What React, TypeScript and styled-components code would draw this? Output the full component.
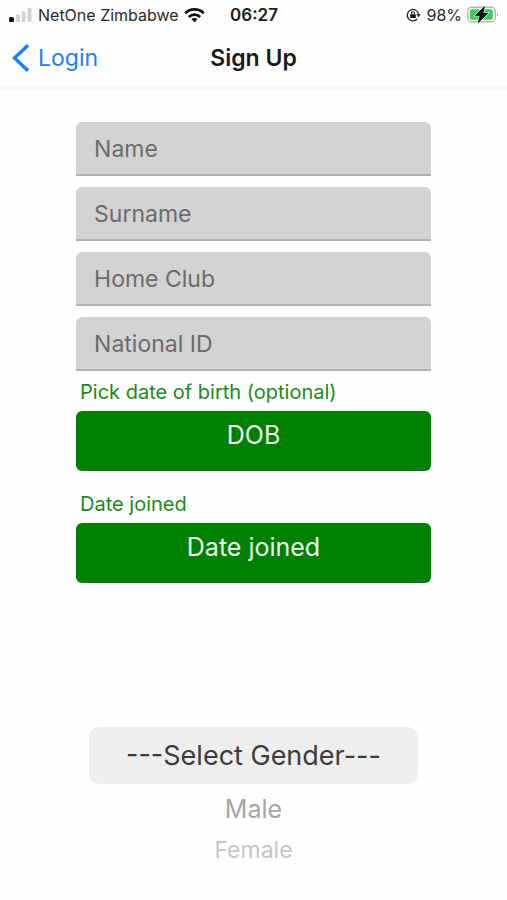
import React, { useState } from "react";
import styled, { createGlobalStyle } from "styled-components";

const GlobalStyle = createGlobalStyle`
  *, *::before, *::after { box-sizing: border-box; }
  body { margin: 0; background: #fefefe; }
  body, button, input { font-family: Inter, "Liberation Sans", sans-serif; }
`;

const Screen = styled.div`
  min-height: 100vh;
  display: flex;
  flex-direction: column;
`;

const StatusBar = styled.div`
  display: grid;
  grid-template-columns: 1fr auto 1fr;
  align-items: center;
  height: 30px;
  padding: 0 8px 0 9px;
  font-size: 16px;
  line-height: 20px;
  color: #2b2b2b;
`;

const StatusGroup = styled.div<{ $end?: boolean }>`
  display: flex;
  align-items: center;
  justify-content: ${(p) => (p.$end ? "flex-end" : "flex-start")};
  gap: 5px;
  white-space: nowrap;
`;

const Clock = styled.time`
  font-size: 17px;
  font-weight: 600;
  color: #1c1c1c;
`;

const NavBar = styled.header`
  display: grid;
  grid-template-columns: 1fr auto 1fr;
  align-items: center;
  height: 60px;
  padding: 0 12px;
  border-bottom: 4px solid #f6f6f6;
`;

const BackLink = styled.a`
  display: flex;
  align-items: center;
  gap: 8px;
  font-size: 23px;
  line-height: 30px;
  color: #1a80f5;
  text-decoration: none;
`;

const Title = styled.h1`
  margin: 0;
  font-size: 23px;
  line-height: 30px;
  font-weight: 600;
  color: #1a1a1a;
`;

const Form = styled.form`
  width: 70%;
  margin: 32px auto 0;
  display: flex;
  flex-direction: column;
`;

const Fields = styled.div`
  display: grid;
  gap: 11px;
`;

const Field = styled.input`
  width: 100%;
  height: 54px;
  padding: 2px 18px 0;
  border: 0;
  border-bottom: 2px solid #b0b0b0;
  border-radius: 6px 6px 0 0;
  background: #d3d3d3;
  color: #333;
  font-size: 23px;
  &::placeholder { color: #6c6c6c; opacity: 1; }
`;

const DateGroup = styled.div<{ $gap: number }>`
  margin-top: ${(p) => p.$gap}px;
  display: flex;
  flex-direction: column;
`;

const DateLabel = styled.label`
  padding: 0 4px;
  font-size: 20px;
  line-height: 38px;
  color: #1a8a1a;
`;

const DateButton = styled.button`
  height: 60px;
  padding: 8px 0 20px;
  border: 0;
  border-radius: 6px;
  background: #008000;
  color: #eef8ee;
  font-size: 25px;
  line-height: 32px;
`;

const Picker = styled.fieldset`
  margin: 144px 13px 0;
  padding: 0;
  border: 0;
  min-width: 0;
  text-align: center;
`;

const tones = {
  near: { color: "#3c3c3c", size: 27, height: 57 },
  mid: { color: "#a6a6a6", size: 25, height: 50 },
  far: { color: "#c6c6c6", size: 23, height: 32 },
};

const Option = styled.label<{ $tone: keyof typeof tones }>`
  display: block;
  position: relative;
  border-radius: 10px;
  background: ${(p) => (p.$tone === "near" ? "#eeeeee" : "transparent")};
  color: ${(p) => tones[p.$tone].color};
  font-size: ${(p) => tones[p.$tone].size}px;
  line-height: ${(p) => tones[p.$tone].height}px;
`;

const OptionInput = styled.input`
  position: absolute;
  inset: 0;
  width: 100%;
  height: 100%;
  margin: 0;
  opacity: 0;
`;

const fields = ["Name", "Surname", "Home Club", "National ID"];

const options: { text: string; tone: keyof typeof tones }[] = [
  { text: "---Select Gender---", tone: "near" },
  { text: "Male", tone: "mid" },
  { text: "Female", tone: "far" },
];

const SignalIcon = () => (
  <svg width="24" height="16" viewBox="0 0 24 16" aria-hidden="true">
    <rect x="0" y="10" width="5" height="5" rx="1.5" fill="#111" />
    <rect x="7" y="7.500" width="4" height="7.500" rx="1" fill="#d2d2d2" />
    <rect x="12.500" y="4.500" width="4" height="10.500" rx="1" fill="#d2d2d2" />
    <rect x="18.500" y="1" width="4" height="14" rx="1" fill="#d2d2d2" />
  </svg>
);

const WifiIcon = () => (
  <svg width="21" height="16" viewBox="0 0 21 16" fill="none" stroke="#111" strokeWidth="2.700" aria-hidden="true">
    <path d="M1.200 6.200C6.400 1.100 14.600 1.100 19.800 6.200" />
    <path d="M4.800 9.900C8 6.900 13 6.900 16.200 9.900" />
    <path d="M7.300 12.100C9.200 10.500 11.800 10.500 13.700 12.100L10.500 15.200Z" fill="#111" stroke="none" />
  </svg>
);

const LockIcon = () => (
  <svg width="15" height="14" viewBox="0 0 15 14" fill="none" stroke="#222" aria-hidden="true">
    <path d="M11.200 11A5.700 5.700 0 1 1 12.500 5.700" strokeWidth="1.300" />
    <path d="M10.300 6H14.700L12.500 9.200Z" fill="#222" stroke="none" />
    <rect x="4.200" y="6.300" width="5.600" height="3.800" rx="0.700" fill="#111" stroke="none" />
    <path d="M5.500 6.500V5.200a1.500 1.500 0 0 1 3 0V6.500" strokeWidth="1.100" />
  </svg>
);

const BatteryIcon = () => (
  <svg width="32" height="18" viewBox="0 0 32 18" aria-hidden="true">
    <rect x="0.750" y="1.250" width="27.500" height="14.500" rx="4" fill="#fff" stroke="#b4b4b4" strokeWidth="1.400" />
    <rect x="2.800" y="3.300" width="23" height="10.400" rx="2" fill="#3ccb5c" />
    <path d="M30 6.200c1.500 0.600 1.500 4 0 4.600Z" fill="#b4b4b4" />
    <path
      d="M17.500 0.600L8.400 9.600H13L11.300 16.800L20.800 7.200H16Z"
      fill="#111"
      stroke="#d8f5de"
      strokeWidth="1.800"
      paintOrder="stroke"
    />
    <path d="M17.500 0.600L8.400 9.600H13L11.300 16.800L20.800 7.200H16Z" fill="#111" stroke="#111" strokeWidth="0.500" />
  </svg>
);

const ChevronIcon = () => (
  <svg width="18" height="28" viewBox="0 0 18 28" fill="none" stroke="#1a80f5" strokeWidth="3.400" aria-hidden="true">
    <path d="M16 1.300L2.500 14L16 26.700" />
  </svg>
);

export default function App() {
  const [gender, setGender] = useState(options[0].text);
  return (
    <Screen>
      <GlobalStyle />
      <StatusBar>
        <StatusGroup>
          <SignalIcon />
          <span>NetOne Zimbabwe</span>
          <WifiIcon />
        </StatusGroup>
        <Clock>06:27</Clock>
        <StatusGroup $end>
          <LockIcon />
          <span>98%</span>
          <BatteryIcon />
        </StatusGroup>
      </StatusBar>
      <NavBar>
        <BackLink href="#login">
          <ChevronIcon />
          Login
        </BackLink>
        <Title>Sign Up</Title>
      </NavBar>
      <Form>
        <Fields>
          {fields.map((name) => (
            <Field key={name} type="text" name={name} placeholder={name} aria-label={name} />
          ))}
        </Fields>
        <DateGroup $gap={2}>
          <DateLabel htmlFor="dob">Pick date of birth (optional)</DateLabel>
          <DateButton id="dob" type="button">DOB</DateButton>
        </DateGroup>
        <DateGroup $gap={14}>
          <DateLabel htmlFor="joined">Date joined</DateLabel>
          <DateButton id="joined" type="button">Date joined</DateButton>
        </DateGroup>
        <Picker aria-label="Gender">
          {options.map(({ text, tone }) => (
            <Option key={text} $tone={tone}>
              <OptionInput
                type="radio"
                name="gender"
                value={text}
                checked={gender === text}
                onChange={() => setGender(text)}
              />
              {text}
            </Option>
          ))}
        </Picker>
      </Form>
    </Screen>
  );
}
